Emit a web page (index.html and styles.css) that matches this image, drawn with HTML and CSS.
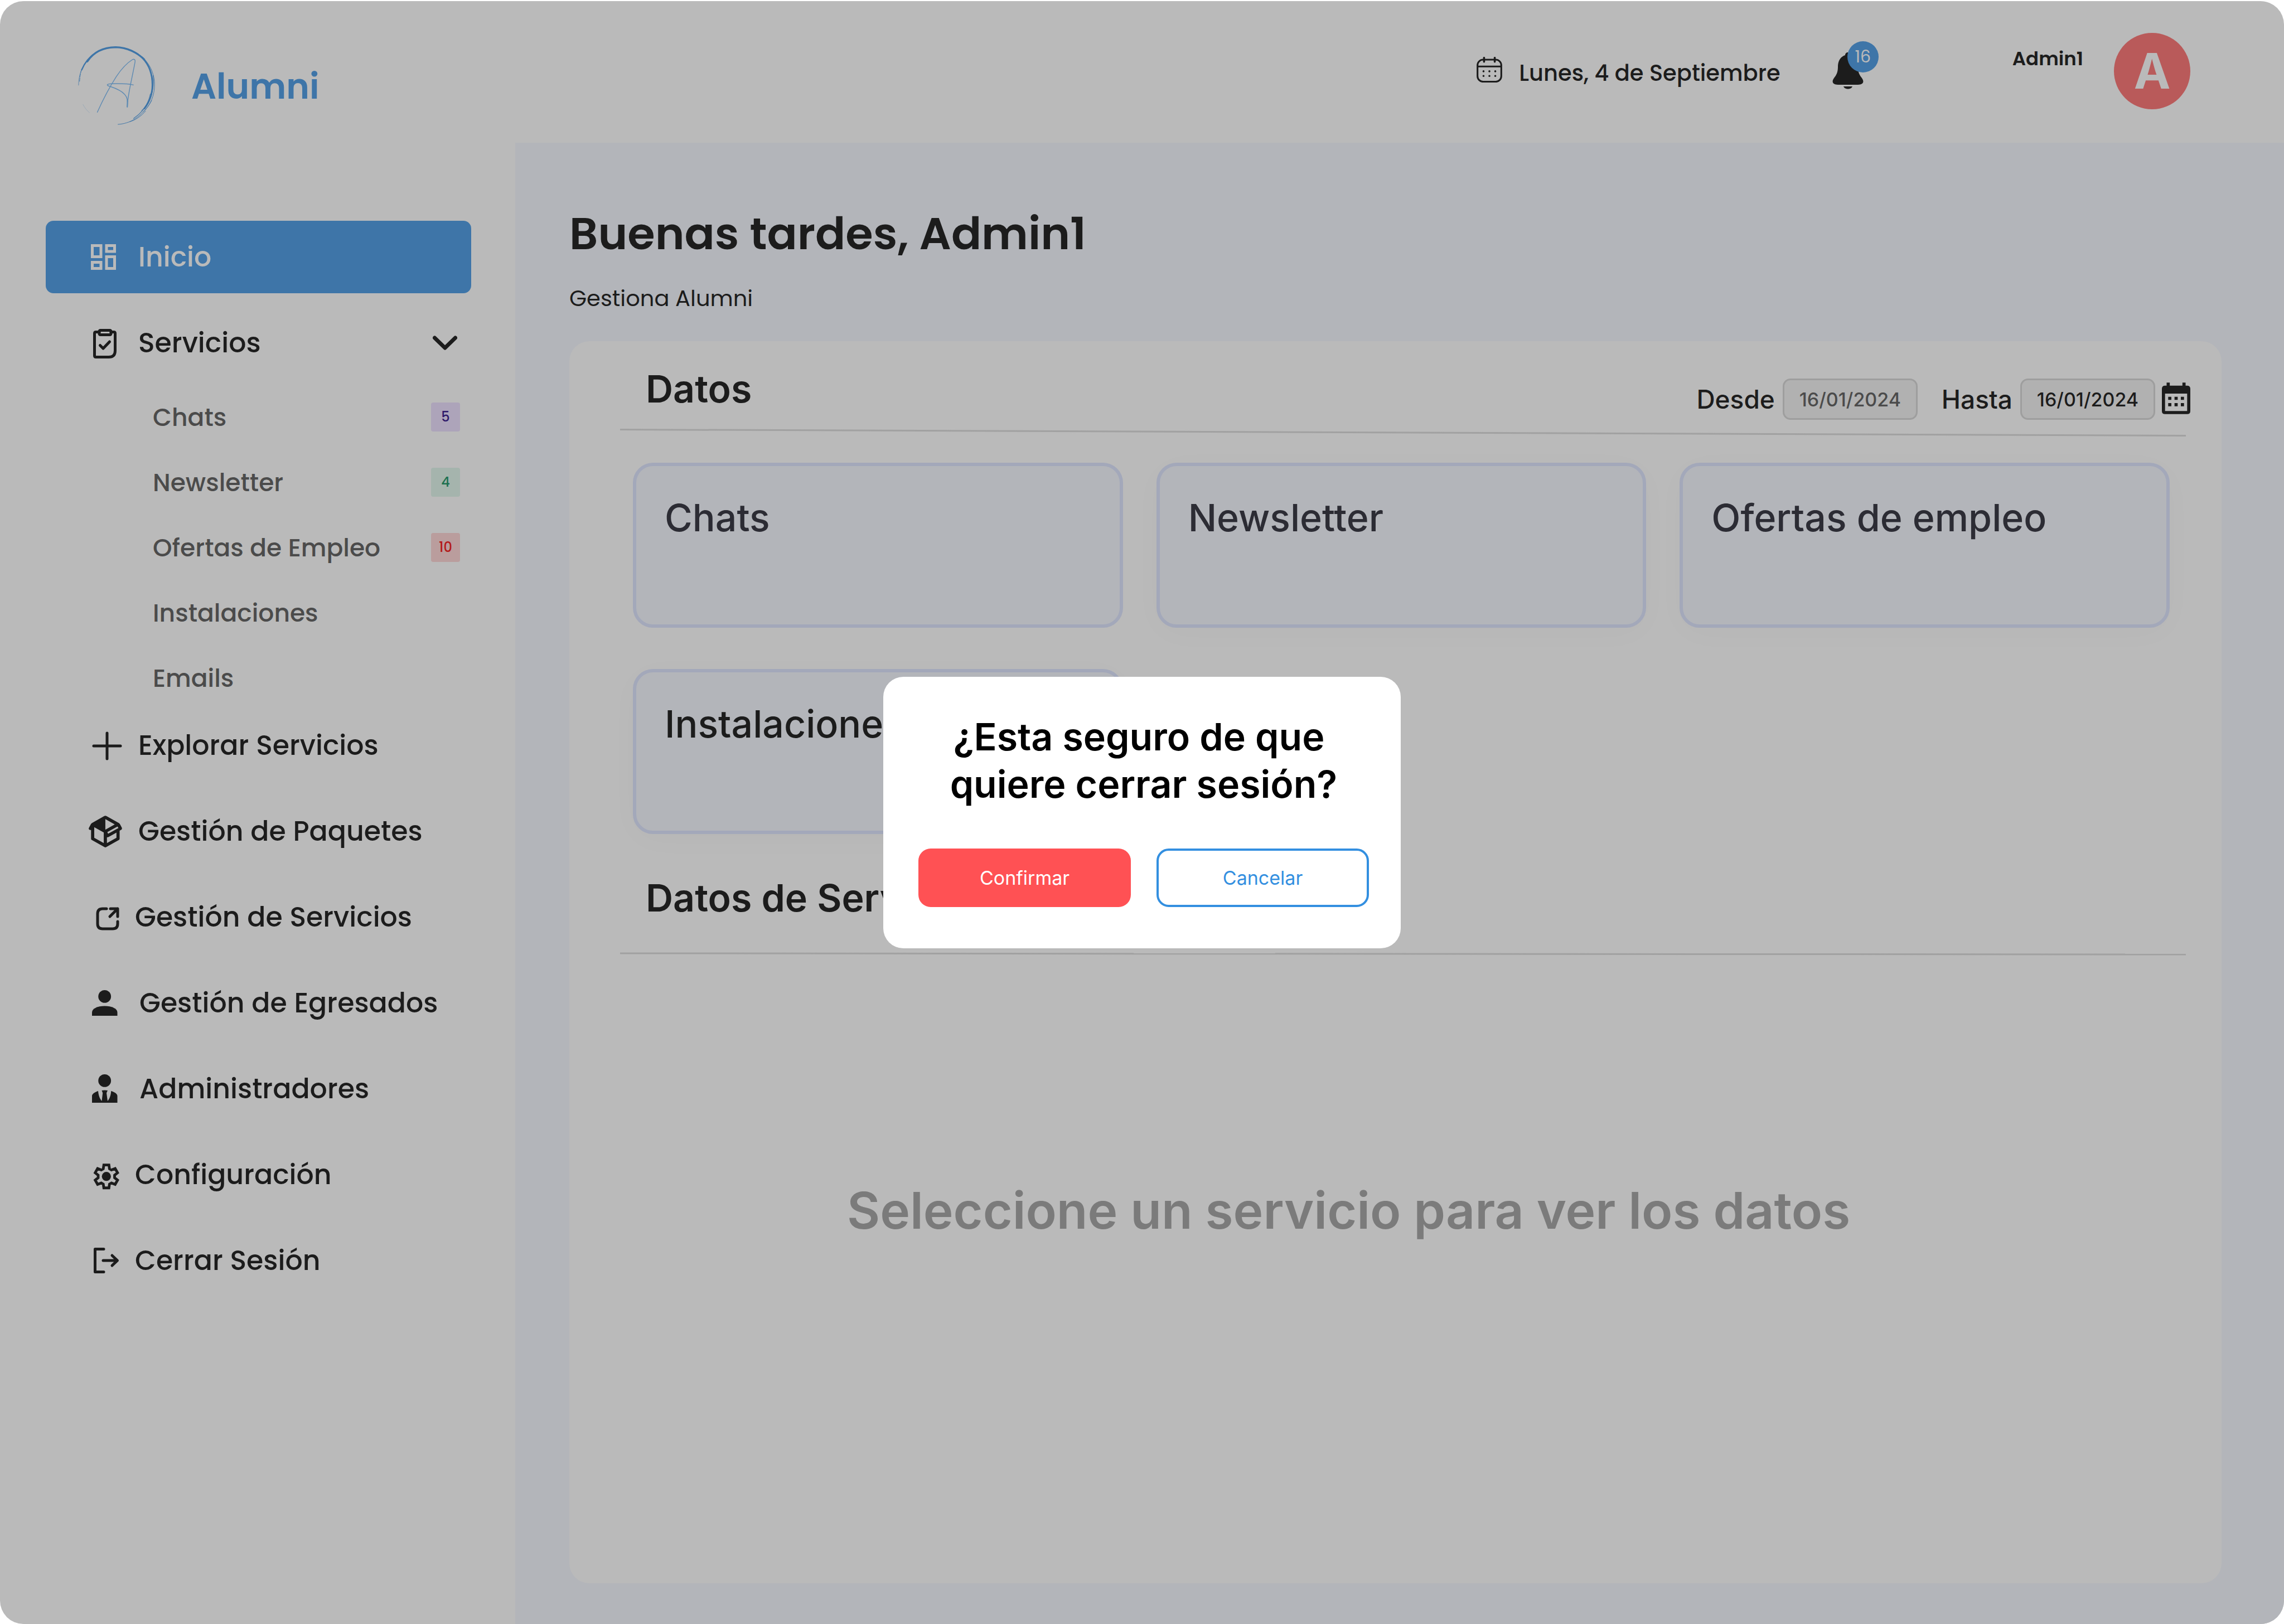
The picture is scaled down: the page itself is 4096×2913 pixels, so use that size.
FILE: index.html
```html
<!DOCTYPE html>
<html lang="es">
<head>
  <meta charset="utf-8">
  <meta name="viewport" content="width=device-width, initial-scale=1">
  <title>Alumni</title>
  <link rel="stylesheet" href="styles.css">
</head>
<body>
<div class="app">
  <header class="topbar">
    <a class="brand" href="#">
      <svg class="brand-logo" viewBox="0 0 720 720" fill="none" stroke="#3e75a8" stroke-linecap="round" aria-hidden="true">
        <path d="M54 374C55 335 60 300 74 262" stroke-width="3"/>
        <path d="M62 345C64 310 68 285 78 255" stroke-width="4" stroke-dasharray="26 7"/>
        <path d="M78 258C125 145 225 88 330 88" stroke-width="10"/>
        <path d="M120 195C170 120 250 88 335 87C420 88 500 130 550 180" stroke-width="14"/>
        <path d="M540 172C590 225 612 300 612 372C612 440 590 500 552 550" stroke-width="12"/>
        <path d="M400 92C520 115 628 225 628 370C628 450 600 520 545 575" stroke-width="4"/>
        <path d="M618 300C626 400 608 480 550 550C525 582 500 605 470 625" stroke-width="5"/>
        <path d="M606 490C570 560 500 625 440 650C410 661 385 668 352 670" stroke-width="4"/>
        <path d="M596 440C585 495 560 540 530 565" stroke-width="4"/>
        <path d="M560 570C525 610 480 640 440 650" stroke-width="4"/>
        <path d="M88 520C100 543 116 565 137 582" stroke-width="1"/>
        <g stroke="#5f8bb3">
          <path d="M196 578C240 480 300 370 340 308C385 240 430 200 462 180C476 174 483 182 481 196C465 290 432 420 425 500" stroke-width="6"/>
          <path d="M422 538C428 500 422 465 404 445C370 405 310 390 276 378C264 370 276 364 300 363C350 362 420 360 468 372" stroke-width="6"/>
          <path d="M422 538L424 485" stroke-width="9"/>
        </g>
      </svg>
      <span class="brand-name">Alumni</span>
    </a>
    <div class="topbar-tools">
      <div class="today">
        <svg class="today-icon" viewBox="72 162 192 192" fill="none" stroke="#1c1c1c" aria-hidden="true">
          <rect x="79" y="183" width="178" height="165" rx="42" stroke-width="13"/>
          <path d="M79 234H257" stroke-width="13"/>
          <path d="M128 169V198M208 169V198" stroke-width="15" stroke-linecap="round"/>
          <path d="M124 270h.1M168 270h.1M212 270h.1M124 305h.1M168 305h.1M212 305h.1" stroke-width="15" stroke-linecap="round"/>
        </svg>
        <time class="today-text" datetime="2023-09-04">Lunes, 4 de Septiembre</time>
      </div>
      <button class="bell" type="button" aria-label="Notificaciones">
        <svg class="bell-icon" viewBox="0 0 56 66" fill="#1c1c1c" aria-hidden="true">
          <path d="M28 0C31 0 33 2 33 5C42 8 46 16 46 26C46 36 49 41 53 46C58 53 55 58 46 58H10C1 58 -2 53 3 46C7 41 10 36 10 26C10 16 14 8 23 5C23 2 25 0 28 0Z"/>
          <path d="M20 61H36C34 67 22 67 20 61Z"/>
        </svg>
        <span class="bell-count">16</span>
      </button>
      <span class="user-name">Admin1</span>
      <span class="avatar">A</span>
    </div>
  </header>

  <div class="body">
    <nav class="sidebar">
      <a class="item item-active" href="#">
        <svg class="icon" viewBox="0 0 68 68" fill="none" stroke="currentColor" stroke-width="5" aria-hidden="true">
          <path d="M9.500 13.500H25V33.500H9.500ZM9.500 43.500H25V54.500H9.500ZM35 13.500H49.500V24H35ZM35 33.500H49.500V54.500H35Z"/>
        </svg>
        Inicio
      </a>
      <button class="item item-group" type="button" aria-expanded="true">
        <svg class="icon" viewBox="0 0 68 68" fill="none" stroke="currentColor" stroke-width="5" stroke-linejoin="round" stroke-linecap="round" aria-hidden="true">
          <path d="M22 14.500H16Q13.500 14.500 13.500 17V57Q13.500 59.500 16 59.500H39Q50.500 59.500 50.500 48V17Q50.500 14.500 48 14.500H43"/>
          <rect x="22" y="11.500" width="21" height="8" rx="2"/>
          <path d="M23.500 38.500L29 44L40.500 32"/>
        </svg>
        Servicios
        <svg class="chevron" viewBox="0 0 44 26" fill="none" stroke="currentColor" stroke-width="7" stroke-linecap="round" stroke-linejoin="round" aria-hidden="true"><path d="M3.500 4L22 22L40.500 4"/></svg>
      </button>
      <ul class="sublist">
        <li><a class="subitem" href="#">Chats <span class="tag tag-purple">5</span></a></li>
        <li><a class="subitem" href="#">Newsletter <span class="tag tag-green">4</span></a></li>
        <li><a class="subitem" href="#">Ofertas de Empleo <span class="tag tag-red">10</span></a></li>
        <li><a class="subitem" href="#">Instalaciones</a></li>
        <li><a class="subitem" href="#">Emails</a></li>
      </ul>
      <a class="item" href="#">
        <svg class="icon" viewBox="0 0 68 68" fill="none" stroke="currentColor" stroke-width="5" stroke-linecap="round" aria-hidden="true"><path d="M12 35H60M36 12V58"/></svg>
        Explorar Servicios
      </a>
      <a class="item" href="#">
        <svg class="icon" viewBox="0 0 68 68" aria-hidden="true">
          <g transform="translate(-14 -13) scale(.237)">
            <path fill="currentColor" d="M198 81Q203 81 208 84L300 136Q306 140 309 146L323 172Q326 184 317 188L306 194V255Q306 262 300 265L204 319Q198 322 192 319L96 265Q90 262 90 255V189H82Q70 186 73 174L88 146Q91 140 97 136L188 84Q193 81 198 81Z"/>
            <path fill="#bababa" d="M198 107L269 147L198 187ZM114 168L186 208V288L114 248ZM213 205L290 162L297 174L219 217ZM210 245L221 243L282 209V248L210 288Z"/>
          </g>
        </svg>
        Gestión de Paquetes
      </a>
      <a class="item item-near" href="#">
        <svg class="icon" viewBox="0 0 68 68" fill="none" stroke="currentColor" stroke-width="5" stroke-linecap="round" stroke-linejoin="round" aria-hidden="true">
          <path d="M35 19H28Q19 19 19 28V46Q19 55 28 55H46Q55 55 55 46V42M42 19H55V33M55 19L41 33"/>
        </svg>
        Gestión de Servicios
      </a>
      <a class="item item-far" href="#">
        <svg class="icon" viewBox="0 0 68 68" fill="currentColor" aria-hidden="true">
          <circle cx="31.700" cy="22.400" r="11.400"/>
          <path d="M9 57V51C9 44 19 39.500 31.700 39.500S54.500 44 54.500 51V57Z"/>
        </svg>
        Gestión de Egresados
      </a>
      <a class="item item-far" href="#">
        <svg class="icon" viewBox="0 0 68 68" fill="currentColor" aria-hidden="true">
          <circle cx="31.700" cy="19.400" r="11.400"/>
          <path d="M9 59V47C9 43 14 40 20 38C20.500 45 23 52 26.500 56L28.200 41.500L26.500 37Q31.700 36 37 37L35 41.500L37 56C40.500 52 43 45 43.200 38C50 40 54.500 43 54.500 47V59Z"/>
        </svg>
        Administradores
      </a>
      <a class="item item-near" href="#">
        <svg class="icon" viewBox="0 0 68 68" aria-hidden="true">
          <g transform="translate(-14 -324.500) scale(.254)">
            <path fill="none" stroke="currentColor" stroke-width="19" d="M174 1343H210L214 1370L228 1378L254 1368L271 1398L250 1415V1433L271 1450L254 1480L228 1470L214 1478L210 1505H174L170 1478L156 1470L130 1480L113 1450L134 1433V1415L113 1398L130 1368L156 1378L170 1370Z"/>
            <circle fill="currentColor" cx="192" cy="1424" r="32"/>
          </g>
        </svg>
        Configuración
      </a>
      <button class="item item-near" type="button">
        <svg class="icon" viewBox="0 0 68 68" fill="none" stroke="currentColor" stroke-width="5" stroke-linecap="round" stroke-linejoin="round" aria-hidden="true">
          <path d="M30 13.500H14.500V54.500H30M29 34H54M45 25L54.500 34L45 43"/>
        </svg>
        Cerrar Sesión
      </button>
    </nav>

    <main class="main">
      <h1 class="greeting">Buenas tardes, Admin1</h1>
      <p class="lead">Gestiona Alumni</p>
      <section class="panel">
        <div class="panel-head">
          <h2 class="panel-title">Datos</h2>
          <form class="range">
            <label class="range-label" for="desde">Desde</label>
            <input class="date date-muted" id="desde" type="text" value="16/01/2024">
            <label class="range-label range-label-next" for="hasta">Hasta</label>
            <input class="date" id="hasta" type="text" value="16/01/2024">
            <button class="picker" type="button" aria-label="Abrir calendario">
              <svg class="picker-icon" viewBox="1116 192 216 240" aria-hidden="true">
                <path fill="#1c1c1c" fill-rule="evenodd" d="M1152 192H1176V216H1272V192H1296V216H1308Q1332 216 1332 240V408Q1332 432 1308 432H1140Q1116 432 1116 408V240Q1116 216 1140 216H1152ZM1140 276V408H1308V276Z"/>
                <path fill="#1c1c1c" d="M1164 300h24v24h-24zM1212 300h24v24h-24zM1260 300h24v24h-24zM1164 348h24v24h-24zM1212 348h24v24h-24zM1260 348h24v24h-24z"/>
              </svg>
            </button>
          </form>
        </div>
        <svg class="rule" viewBox="0 0 100 14" preserveAspectRatio="none" aria-hidden="true"><path d="M0 1.500L100 12.500" stroke="#a1a1a1" stroke-width="3" vector-effect="non-scaling-stroke"/></svg>
        <div class="cards">
          <button class="card card-flat" type="button">Chats</button>
          <button class="card" type="button">Newsletter</button>
          <button class="card" type="button">Ofertas de empleo</button>
          <button class="card card-dark" type="button">Instalaciones</button>
        </div>
        <h2 class="panel-title panel-title-second">Datos de Servicios</h2>
        <svg class="rule rule-second" viewBox="0 0 100 6" preserveAspectRatio="none" aria-hidden="true"><path d="M0 2L100 4" stroke="#a1a1a1" stroke-width="3" vector-effect="non-scaling-stroke"/></svg>
        <p class="empty">Seleccione un servicio para ver los datos</p>
      </section>
    </main>
  </div>
</div>

<div class="modal-layer">
  <div class="modal" role="dialog" aria-modal="true" aria-labelledby="modal-title">
    <h2 class="modal-title" id="modal-title">¿Esta seguro de que&nbsp;<br>quiere cerrar sesión?</h2>
    <div class="modal-actions">
      <button class="btn btn-danger" type="button">Confirmar</button>
      <button class="btn btn-outline" type="button">Cancelar</button>
    </div>
  </div>
</div>
</body>
</html>
```
FILE: styles.css
```css
*, *::before, *::after { box-sizing: border-box; }

body {
  margin: 0;
  padding-top: 2px;
  background: #fff;
  color: #1c1c1c;
  font-family: Inter, "Liberation Sans", sans-serif;
}

h1, h2, p, ul { margin: 0; padding: 0; }
ul { list-style: none; }
a { color: inherit; text-decoration: none; }
button, input { font: inherit; color: inherit; }
button { border: 0; padding: 0; background: none; text-align: left; cursor: pointer; }
svg { display: block; flex: none; }

.app {
  display: flex;
  flex-direction: column;
  min-height: calc(100vh - 2px);
  border-radius: 42px;
  overflow: hidden;
  background: #bababa;
}

/* Top bar */
.topbar {
  display: flex;
  justify-content: space-between;
  align-items: center;
  height: 254px;
  padding: 0 168px 0 128px;
  font-family: Poppins, Inter, sans-serif;
}
.brand { display: flex; align-items: center; gap: 44px; padding-top: 40px; }
.brand-logo { width: 171px; height: 171px; }
.brand-name { padding-top: 12px; color: #3e75a8; font-size: 63px; font-weight: 600; line-height: 72px; }
.topbar-tools { display: flex; align-items: center; padding-bottom: 4px; }
.today { display: flex; align-items: center; gap: 30px; padding-bottom: 4px; font-size: 40px; font-weight: 500; line-height: 48px; }
.today-icon { width: 46px; height: 46px; }
.today-text { padding-top: 12px; }
.bell { position: relative; margin: 0 267px 0 93px; }
.bell-icon { width: 56px; height: 66px; }
.bell-count {
  position: absolute;
  left: 27px;
  top: -20px;
  width: 56px;
  height: 56px;
  border-radius: 50%;
  background: #3e75a8;
  color: #bababa;
  font-size: 30px;
  font-weight: 400;
  line-height: 56px;
  text-align: center;
}
.user-name { margin-right: 55px; padding-bottom: 44px; font-size: 34px; font-weight: 600; line-height: 40px; }
.avatar {
  width: 137px;
  height: 137px;
  border-radius: 50%;
  background: #b95a5a;
  color: #bababa;
  font-family: Inter, sans-serif;
  font-size: 88px;
  font-weight: 700;
  line-height: 137px;
  text-align: center;
}

.body { display: flex; flex: 1; }

/* Side navigation */
.sidebar {
  display: flex;
  flex-direction: column;
  flex: none;
  width: 924px;
  padding: 140px 79px 0 82px;
  font-family: Poppins, Inter, sans-serif;
  font-size: 49px;
  font-weight: 500;
}
.item {
  display: flex;
  align-items: center;
  gap: 24px;
  height: 130px;
  margin-bottom: 24px;
  padding: 0 25px 0 74px;
  border-radius: 14px;
}
.item-active { background: #3e75a8; color: #bababa; }
.item-near { gap: 18px; }
.item-far { gap: 26px; }
.item-group { margin-bottom: 18px; }
.icon { width: 68px; height: 68px; }
.chevron { width: 44px; height: 26px; margin-left: auto; }
.sublist {
  display: flex;
  flex-direction: column;
  gap: 17px;
  margin-bottom: 6px;
  color: #4b4b4b;
  font-size: 44px;
}
.subitem {
  display: flex;
  align-items: center;
  justify-content: space-between;
  height: 100px;
  padding: 0 20px 0 192px;
}
.tag {
  width: 52px;
  height: 52px;
  border-radius: 4px;
  font-size: 24px;
  line-height: 52px;
  text-align: center;
}
.tag-purple { background: #ada4ba; color: #2f1a6b; }
.tag-green { background: #a5b4ad; color: #1d7150; }
.tag-red { background: #ba9d9d; color: #b31919; }

/* Main area */
.main {
  display: flex;
  flex-direction: column;
  flex: 1;
  padding: 115px 112px 73px 97px;
  background: #b3b5ba;
}
.greeting { font-family: Poppins, Inter, sans-serif; font-size: 80px; font-weight: 600; line-height: 96px; }
.lead { margin: 44px 0 53px; font-family: Poppins, Inter, sans-serif; font-size: 40px; line-height: 48px; }
.panel {
  flex: 1;
  padding: 45px 64px 0 91px;
  border-radius: 36px;
  background: #bababa;
}
.panel-head { display: flex; justify-content: space-between; height: 112px; margin-right: -8px; padding-left: 46px; }
.panel-title { font-size: 68px; font-weight: 600; line-height: 80px; }
.range { display: flex; align-items: center; height: 118px; }
.range-label { margin-right: 14px; font-size: 46px; font-weight: 500; line-height: 56px; }
.range-label-next { margin-left: 43px; }
.date {
  width: 242px;
  height: 74px;
  border: 3px solid #9e9e9e;
  border-radius: 14px;
  padding: 0;
  background: #b1b1b1;
  font-size: 34px;
  font-weight: 500;
  text-align: center;
}
.date-muted { color: #4b4b4b; }
.picker { margin-left: 12px; padding-bottom: 4px; }
.picker-icon { width: 51px; height: 57px; }
.rule { width: 100%; height: 14px; }

.cards {
  display: grid;
  grid-template-columns: repeat(3, 1fr);
  gap: 74px 60px;
  margin: 47px 29px 0 23px;
}
.card {
  display: flex;
  align-items: flex-start;
  height: 296px;
  padding: 52px 51px;
  border: 6px solid #a3a8ba;
  border-radius: 36px;
  background: #b3b5ba;
  box-shadow: 0 10px 60px rgba(0, 0, 0, 0.02);
  color: #2c2c34;
  font-size: 68px;
  font-weight: 500;
  line-height: 80px;
}
.card-flat { box-shadow: none; }
.card-dark { color: #1c1c1c; }
.panel-title-second { margin-top: 74px; padding-left: 46px; }
.rule-second { height: 6px; margin-top: 58px; }
.empty {
  margin-top: 397px;
  padding-left: 407px;
  color: #7b7b7b;
  font-size: 91px;
  font-weight: 600;
  line-height: 120px;
}

/* Log-out confirmation */
.modal-layer {
  position: fixed;
  inset: 2px 0 0;
  display: flex;
  align-items: center;
  justify-content: center;
}
.modal {
  width: 928px;
  padding: 65px 57px 74px 63px;
  border-radius: 36px;
  background: #fff;
}
.modal-title {
  color: #000;
  font-size: 68px;
  font-weight: 600;
  line-height: 85px;
  text-align: center;
}
.modal-actions { display: flex; gap: 46px; margin-top: 73px; }
.btn {
  width: 381px;
  height: 105px;
  border-radius: 22px;
  font-size: 34px;
  font-weight: 400;
  text-align: center;
}
.btn-danger { background: #ff5154; color: #fff; }
.btn-outline { border: 4px solid #338fe0; color: #338fe0; }
```
